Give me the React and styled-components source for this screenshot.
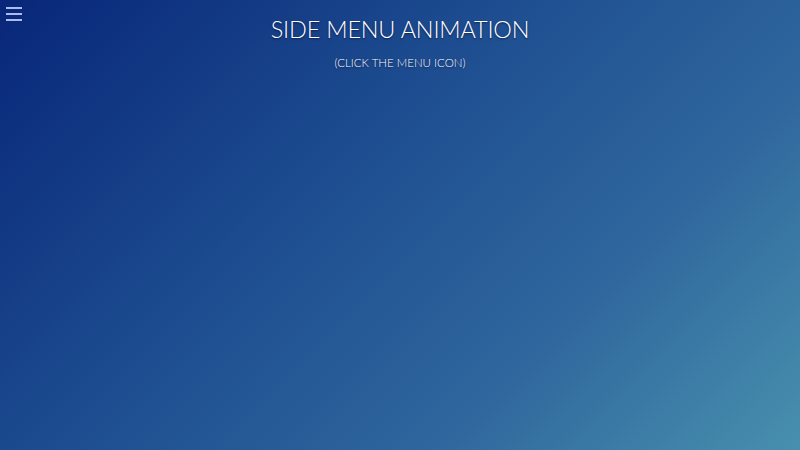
import React from "react";
import styled, { createGlobalStyle } from "styled-components";

const GlobalStyle = createGlobalStyle`
  html, body {
    margin: 0;
    padding: 0;
    height: 100%;
  }
  #root {
    height: 100%;
  }
`;

const Page = styled.div`
  position: relative;
  width: 100%;
  height: 100vh;
  background: linear-gradient(135deg, #082679 0%, #1d4d90 40%, #2f669d 70%, #4890ae 100%);
  font-family: Lato, "Open Sans", sans-serif;
  color: #ffffff;
  display: flex;
  flex-direction: column;
  align-items: center;
  overflow: hidden;
`;

const MenuButton = styled.button`
  position: absolute;
  top: 7px;
  left: 6px;
  width: 16px;
  height: 14px;
  padding: 0;
  border: 0;
  background: none;
  display: flex;
  flex-direction: column;
  justify-content: space-between;
  cursor: pointer;
`;

const Bar = styled.span`
  display: block;
  height: 2px;
  width: 100%;
  background: #a9bdf3;
`;

const Title = styled.h1`
  margin: 16px 0 0;
  font-size: 23.5px;
  font-weight: 300;
  letter-spacing: -0.2px;
  line-height: 26px;
  text-shadow: 0 1px 2px rgba(0, 0, 40, 0.6);
`;

const Subtitle = styled.p`
  margin: 14px 0 0;
  font-size: 11.5px;
  font-weight: 300;
  line-height: 14px;
  text-shadow: 0 1px 2px rgba(0, 0, 40, 0.6);
`;

export default function App() {
  return (
    <>
      <GlobalStyle />
      <Page>
        <MenuButton aria-label="Open menu">
          <Bar />
          <Bar />
          <Bar />
        </MenuButton>
        <Title>SIDE MENU ANIMATION</Title>
        <Subtitle>(CLICK THE MENU ICON)</Subtitle>
      </Page>
    </>
  );
}
